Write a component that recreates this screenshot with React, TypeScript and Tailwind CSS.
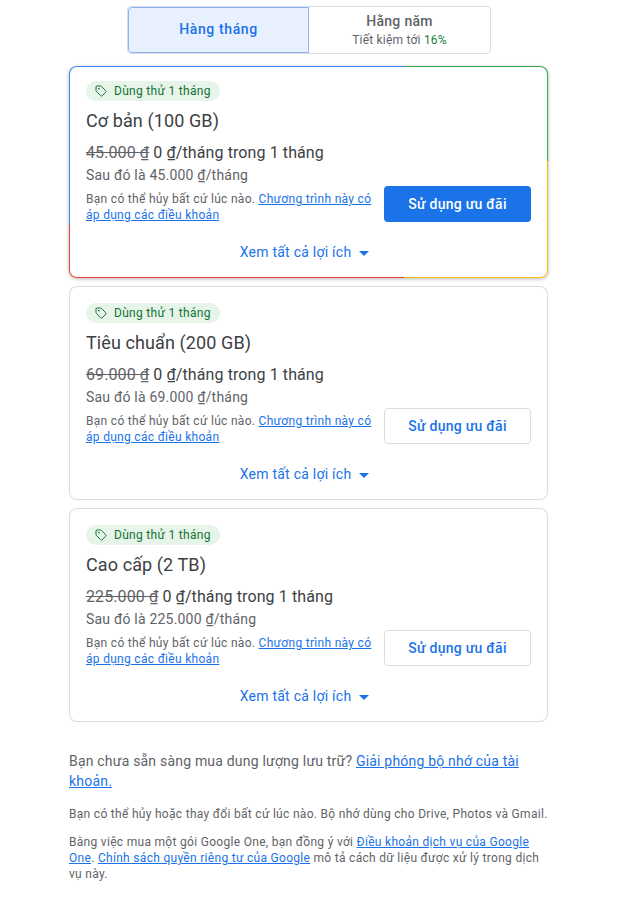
import { Tag } from 'lucide-react'

const plans = [
  { name: 'Cơ bản (100 GB)', oldPrice: '45.000 ₫', after: '45.000', featured: true },
  { name: 'Tiêu chuẩn (200 GB)', oldPrice: '69.000 ₫', after: '69.000', featured: false },
  { name: 'Cao cấp (2 TB)', oldPrice: '225.000 ₫', after: '225.000', featured: false },
]

const linkClass = 'text-[#1a73e8] underline'

function PlanCard({ plan }: { plan: (typeof plans)[number] }) {
  return (
    <div
      className={
        plan.featured
          ? 'relative overflow-hidden rounded-lg p-px h-[212px] shadow-[0_1px_3px_1px_rgba(60,64,67,0.25)]'
          : 'relative overflow-hidden rounded-lg p-px h-[214px] bg-[#dadce0]'
      }
    >
      {/* Four colour border */}
      {plan.featured && (
        <>
          <div className="absolute left-0 top-0 w-[335px] h-[159px] bg-[#4285f4]" />
          <div className="absolute left-[335px] right-0 top-0 h-[95px] bg-[#34a853]" />
          <div className="absolute left-[335px] right-0 top-[95px] bottom-0 bg-[#fbbc04]" />
          <div className="absolute left-0 w-[335px] top-[159px] bottom-0 bg-[#ea4335]" />
        </>
      )}
      <div
        className={
          plan.featured
            ? 'relative h-full bg-white rounded-[7px] pt-[13px] px-4'
            : 'relative h-full bg-white rounded-[7px] pt-[15px] px-4'
        }
      >
        <div className="inline-flex items-center h-5 rounded-full bg-[#e6f4ea] px-[9px] text-[#137333] text-xs tracking-[0.3px]">
          <Tag size={12} strokeWidth={2} className="mr-[7px]" />
          Dùng thử 1 tháng
        </div>
        <h2 className="mt-[5px] text-[#3c4043] text-[18px] leading-6 tracking-[0.1px]">{plan.name}</h2>
        <p className="mt-[10px] text-[#3c4043] text-base leading-5 tracking-[0.1px]">
          <span className="text-[#5f6368] line-through">{plan.oldPrice}</span> 0 ₫/tháng trong 1 tháng
        </p>
        <p className="text-[#5f6368] text-sm leading-5 tracking-[0.2px] mt-[2px]">Sau đó là {plan.after} ₫/tháng</p>
        <div className="flex items-start justify-between mt-px">
          <p className="w-[290px] pt-[5px] text-[#5f6368] text-xs leading-4 tracking-[0.3px]">
            Bạn có thể hủy bất cứ lúc nào. <a className={linkClass}>Chương trình này có áp dụng các điều khoản</a>
          </p>
          <button
            className={
              plan.featured
                ? 'w-[147px] h-9 rounded bg-[#1a73e8] text-white text-sm font-medium tracking-[0.25px]'
                : 'w-[147px] h-9 rounded border border-[#dadce0] bg-white text-[#1a73e8] text-sm font-medium tracking-[0.25px]'
            }
          >
            Sử dụng ưu đãi
          </button>
        </div>
        <div className="flex items-center justify-center mt-[19px] pr-2 text-[#1a73e8] text-sm leading-5 tracking-[0.25px]">
          Xem tất cả lợi ích
          <svg viewBox="0 0 10 5" className="ml-2 mt-[2px] w-[10px] h-[5px]" fill="#1a73e8">
            <path d="M0 0l5 5 5-5z" />
          </svg>
        </div>
      </div>
    </div>
  )
}

export default function App() {
  return (
    <div className="min-h-[908px] bg-white font-['Roboto',sans-serif]">
      <div className="w-[479px] ml-[69px] pt-[6px]">
        {/* Toggle */}
        <div className="flex w-[364px] h-[48px] ml-[58px] rounded border border-[#dadce0] overflow-hidden">
          <div className="flex items-center justify-center w-[181px] pb-[2px] bg-[#e8f0fe] border border-[#8ab4f8] rounded-l text-[#1a73e8] text-sm font-medium tracking-[0.6px]">
            Hàng tháng
          </div>
          <div className="flex-1 flex flex-col items-center justify-center">
            <span className="text-[#5f6368] text-sm font-medium leading-5 tracking-[0.3px] -mt-[2px]">Hằng năm</span>
            <span className="text-[#5f6368] text-xs leading-4 tracking-[0.2px] mt-[1px]">
              Tiết kiệm tới <span className="text-[#188038]">16%</span>
            </span>
          </div>
        </div>

        <div className="flex flex-col gap-2 mt-3">
          {plans.map((plan) => (
            <PlanCard key={plan.name} plan={plan} />
          ))}
        </div>

        <p className="mt-[29px] text-[#5f6368] text-sm leading-5 tracking-[0.2px]">
          Bạn chưa sẵn sàng mua dung lượng lưu trữ? <a className={linkClass}>Giải phóng bộ nhớ của tài khoản.</a>
        </p>
        <p className="mt-[15px] text-[#5f6368] text-xs leading-4 tracking-[0.3px]">
          Bạn có thể hủy hoặc thay đổi bất cứ lúc nào. Bộ nhớ dùng cho Drive, Photos và Gmail.
        </p>
        <p className="mt-3 text-[#5f6368] text-xs leading-4 tracking-[0.3px]">
          Bằng việc mua một gói Google One, bạn đồng ý với <a className={linkClass}>Điều khoản dịch vụ của Google One</a>.{' '}
          <a className={linkClass}>Chính sách quyền riêng tư của Google</a> mô tả cách dữ liệu được xử lý trong dịch vụ này.
        </p>
      </div>
    </div>
  )
}
